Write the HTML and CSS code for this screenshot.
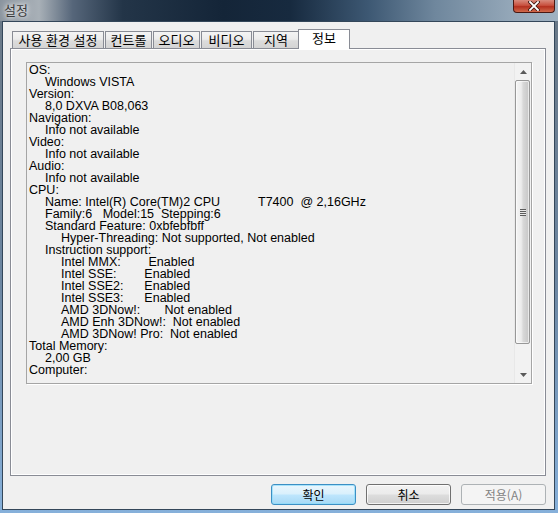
FILE: index.html
```html
<!DOCTYPE html>
<html lang="ko">
<head>
<meta charset="utf-8">
<title>설정</title>
<link rel="stylesheet" href="styles.css">
</head>
<body>
<div class="window">
  <div class="titlebar">
    <span class="title">설정</span>
    <div class="close">
      <svg width="12" height="10" viewBox="0 0 12 10">
        <path d="M2 1 L10 9 M10 1 L2 9" stroke="#3a1410" stroke-width="3.4" stroke-linecap="square"/>
        <path d="M2 1 L10 9 M10 1 L2 9" stroke="#ffffff" stroke-width="1.8" stroke-linecap="square"/>
      </svg>
    </div>
  </div>
  <div class="client">
    <div class="tabs">
      <div class="tab w1">사용 환경 설정</div>
      <div class="tab w2">컨트롤</div>
      <div class="tab w3">오디오</div>
      <div class="tab w4">비디오</div>
      <div class="tab w5">지역</div>
      <div class="tab active w6">정보</div>
    </div>
    <div class="panel">
      <div class="infobox">
        <div class="infotext">
          <div class="l0">OS:</div>
          <div class="l1">Windows VISTA</div>
          <div class="l0">Version:</div>
          <div class="l1">8,0 DXVA B08,063</div>
          <div class="l0">Navigation:</div>
          <div class="l1">Info not available</div>
          <div class="l0">Video:</div>
          <div class="l1">Info not available</div>
          <div class="l0">Audio:</div>
          <div class="l1">Info not available</div>
          <div class="l0">CPU:</div>
          <div class="l1">Name: Intel(R) Core(TM)2 CPU           T7400  @ 2,16GHz</div>
          <div class="l1">Family:6   Model:15  Stepping:6</div>
          <div class="l1">Standard Feature: 0xbfebfbff</div>
          <div class="l2">Hyper-Threading: Not supported, Not enabled</div>
          <div class="l1">Instruction support:</div>
          <div class="l2">Intel MMX:        Enabled</div>
          <div class="l2">Intel SSE:        Enabled</div>
          <div class="l2">Intel SSE2:      Enabled</div>
          <div class="l2">Intel SSE3:      Enabled</div>
          <div class="l2">AMD 3DNow!:       Not enabled</div>
          <div class="l2">AMD Enh 3DNow!:  Not enabled</div>
          <div class="l2">AMD 3DNow! Pro:  Not enabled</div>
          <div class="l0">Total Memory:</div>
          <div class="l1">2,00 GB</div>
          <div class="l0">Computer:</div>
        </div>
        <div class="scrollbar">
          <div class="sb-btn">
            <svg width="7" height="4" viewBox="0 0 7 4"><path d="M0 4 L3.5 0 L7 4 Z" fill="#5a5a5a"/></svg>
          </div>
          <div class="sb-thumb"><span class="grip"></span></div>
          <div class="sb-track"></div>
          <div class="sb-btn">
            <svg width="7" height="4" viewBox="0 0 7 4"><path d="M0 0 L7 0 L3.5 4 Z" fill="#5a5a5a"/></svg>
          </div>
        </div>
      </div>
    </div>
    <div class="buttons">
      <button class="btn default">확인</button>
      <button class="btn">취소</button>
      <button class="btn" disabled>적용(A)</button>
    </div>
  </div>
</div>
</body>
</html>
```

FILE: styles.css
```css
* { box-sizing: border-box; }

html, body {
  margin: 0;
  padding: 0;
}

body {
  width: 558px;
  height: 513px;
  overflow: hidden;
  font-family: "Noto Sans CJK KR", "Liberation Sans", sans-serif;
  font-size: 12px;
  color: #000;
}

.window {
  width: 558px;
  height: 513px;
  display: flex;
  flex-direction: column;
  background: linear-gradient(to bottom, #6a7886 0%, #6d87a2 55%, #86b0da 100%);
}

.titlebar {
  height: 21px;
  flex: none;
  display: flex;
  align-items: flex-start;
  justify-content: space-between;
  background: linear-gradient(to right, #8a949e 0%, #a8b0b7 7%, #56667a 13%, #233548 22%, #142538 40%, #172a3f 52%, #3d5873 66%, #6f879d 78%, #95a8b9 92%, #a0b2c2 100%);
}

.title {
  padding: 2px 0 0 4px;
  line-height: 16px;
  font-size: 13px;
  color: #3a3a3a;
  text-shadow: 0 0 4px #ffffff, 0 0 8px #ffffff;
}

.close {
  width: 42px;
  height: 13px;
  margin-right: 3px;
  border: 1px solid #4a1812;
  border-top: none;
  border-radius: 0 0 4px 4px;
  background: linear-gradient(to bottom, #d88a7c 0%, #c8503e 45%, #b4301f 55%, #d06a4c 100%);
  display: flex;
  align-items: flex-start;
  justify-content: center;
  padding-top: 1px;
}

.client {
  flex: 1;
  margin: 0 3px 3px 2px;
  border: 1px solid #34475a;
  background: #f0f0f0;
  display: flex;
  flex-direction: column;
  padding: 7px 8px 0 7px;
}

.tabs {
  display: flex;
  align-items: flex-end;
  height: 20px;
  margin: 0 0 -1px 2px;
  position: relative;
  z-index: 1;
}

.tab {
  height: 17px;
  margin: 0 1px 1px 0;
  border: 1px solid #898c95;
  border-bottom: none;
  background: linear-gradient(to bottom, #f4f4f4 0%, #ececec 45%, #dcdcdc 55%, #d4d4d4 100%);
  text-align: center;
  line-height: 15px;
  font-size: 13px;
  white-space: nowrap;
}

.tab.active {
  height: 20px;
  margin: 0 0 0 -2px;
  background: #ffffff;
  line-height: 16px;
  padding-top: 0;
}

.w1 { width: 92px; }
.w2 { width: 47px; }
.w3 { width: 47px; }
.w4 { width: 51px; }
.w5 { width: 46px; }
.w6 { width: 52px; }

.panel {
  height: 428px;
  flex: none;
  border: 1px solid #898c95;
  box-shadow: inset 0 0 0 1px #ffffff;
  background: #f0f0f0;
  padding: 13px 0 0 15px;
}

.infobox {
  width: 506px;
  height: 322px;
  display: flex;
  border: 1px solid #a5a5a5;
  box-shadow: 1px 1px 0 #ffffff;
  background: #f0f0f0;
}

.infotext {
  flex: 1;
  padding: 1px 0 0 2px;
  font-family: "Liberation Sans", "Noto Sans CJK KR", sans-serif;
  font-size: 12.5px;
  line-height: 12px;
  overflow: hidden;
}

.infotext div {
  white-space: pre;
  height: 12px;
}

.l0 { padding-left: 0; }
.l1 { padding-left: 16px; }
.l2 { padding-left: 32px; }

.scrollbar {
  width: 17px;
  flex: none;
  display: flex;
  flex-direction: column;
  background: #f2f2f2;
  border-left: 1px solid #e8e8e8;
}

.sb-btn {
  height: 17px;
  flex: none;
  display: flex;
  align-items: center;
  justify-content: center;
}

.sb-thumb {
  height: 264px;
  flex: none;
  margin: 0 1px 0 0;
  border: 1px solid #979797;
  border-radius: 2px;
  background: linear-gradient(to right, #f4f4f4 0%, #ececec 40%, #d8d8d8 55%, #c6c6c6 100%);
  box-shadow: inset 0 0 0 1px rgba(255, 255, 255, 0.6);
  display: flex;
  align-items: center;
  justify-content: center;
}

.grip {
  width: 6px;
  height: 7px;
  background: repeating-linear-gradient(to bottom, #5c5c5c 0, #5c5c5c 1px, #e8e8e8 1px, #e8e8e8 2px);
}

.sb-track {
  flex: 1;
}

.buttons {
  display: flex;
  justify-content: flex-end;
  gap: 10px;
  margin-top: 8px;
}

.btn {
  width: 85px;
  height: 21px;
  padding: 0;
  margin: 0;
  border: 1px solid #707070;
  border-radius: 3px;
  background: linear-gradient(to bottom, #f2f2f2 0%, #ebebeb 48%, #dddddd 52%, #cfcfcf 100%);
  box-shadow: inset 0 0 0 1px rgba(255, 255, 255, 0.75);
  font-family: "Noto Sans CJK KR", "Liberation Sans", sans-serif;
  font-size: 12px;
  line-height: 17px;
  color: #000;
}

.btn.default {
  border-color: #3c8fc4;
  background: linear-gradient(to bottom, #eaf6fd 0%, #d9f0fc 48%, #bee6fd 52%, #a7d9f5 100%);
  box-shadow: inset 0 0 0 1px rgba(140, 220, 250, 0.7);
}

.btn:disabled {
  border-color: #adb2b5;
  background: #f4f4f4;
  box-shadow: none;
  color: #838383;
}
```
